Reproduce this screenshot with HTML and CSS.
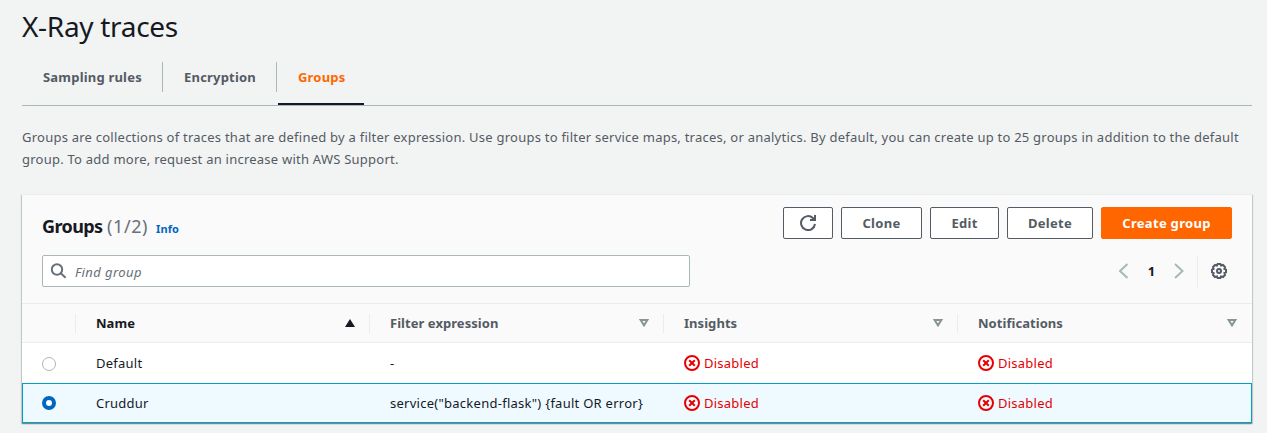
FILE: index.html
```html
<!DOCTYPE html>
<html lang="en">
<head>
<meta charset="utf-8">
<title>X-Ray traces</title>
<link rel="stylesheet" href="styles.css">
</head>
<body>
<svg class="defs" width="0" height="0" aria-hidden="true">
  <symbol id="disabled" viewBox="0 0 16 16"><circle cx="8" cy="8" r="7"/><path d="M5.200 5.200l5.600 5.600M10.800 5.200l-5.600 5.600"/></symbol>
  <symbol id="sort" viewBox="0 0 10 8"><path d="M1.600 1h6.800L5 6.400z"/></symbol>
</svg>
<main class="page">
  <h1 class="title">X-Ray traces</h1>
  <nav class="tabs">
    <a class="tab tab-rules">Sampling rules</a>
    <a class="tab tab-encryption">Encryption</a>
    <a class="tab tab-active">Groups</a>
  </nav>
  <p class="description">
    <span class="line">Groups are collections of traces that are defined by a filter expression. Use groups to filter service maps, traces, or analytics. By default, you can create up to 25 groups in addition to the default</span>
    <span class="line">group. To add more, request an increase with AWS Support.</span>
  </p>
  <section class="panel">
    <header class="toolbar">
      <h2 class="heading"><span class="heading-name">Groups</span><span class="count">(1/2)</span><a class="info">Info</a></h2>
      <div class="actions">
        <button class="button refresh" aria-label="Refresh"><svg width="16" height="16" viewBox="0 0 16 16"><path d="M15 9A7 7 0 1 1 12.900 3l2 2M15 0v5h-5"/></svg></button>
        <button class="button clone">Clone</button>
        <button class="button edit">Edit</button>
        <button class="button delete">Delete</button>
        <button class="button primary">Create group</button>
      </div>
    </header>
    <div class="filters">
      <div class="search">
        <svg width="16" height="16" viewBox="0 0 16 16"><circle cx="6" cy="6.500" r="5.200"/><path d="M9.800 10.300l4.800 4.500"/></svg>
        <span>Find group</span>
      </div>
      <div class="pagination">
        <svg class="arrow" width="10" height="16" viewBox="0 0 10 16"><path d="M8.500 1L1 8l7.500 7"/></svg>
        <b class="page-number">1</b>
        <svg class="arrow" width="10" height="16" viewBox="0 0 10 16"><path d="M1 1l7.500 7L1 15"/></svg>
        <span class="settings"><svg width="16" height="16" viewBox="0 0 16 16"><path d="M6.600 1h2.800l.6 1.600 2-.6 2 2-.6 2 1.600.6v2.800l-1.600.6.6 2-2 2-2-.6-.6 1.600H6.600L6 13.400l-2 .6-2-2 .6-2L1 9.400V6.600L2.600 6 2 4l2-2 2 .6z"/><circle cx="8" cy="8" r="2"/></svg></span>
      </div>
    </div>
    <div class="row head">
      <div class="cell select"></div>
      <div class="cell sorted"><span>Name</span><svg class="asc" width="10" height="8" viewBox="0 0 10 8"><path d="M5 0l5 8H0z"/></svg></div>
      <div class="cell"><span>Filter expression</span><svg class="sort"><use href="#sort"/></svg></div>
      <div class="cell"><span>Insights</span><svg class="sort"><use href="#sort"/></svg></div>
      <div class="cell"><span>Notifications</span><svg class="sort"><use href="#sort"/></svg></div>
    </div>
    <div class="row">
      <div class="cell select"><i class="radio"></i></div>
      <div class="cell">Default</div>
      <div class="cell">-</div>
      <div class="cell status"><svg><use href="#disabled"/></svg><span>Disabled</span></div>
      <div class="cell status"><svg><use href="#disabled"/></svg><span>Disabled</span></div>
    </div>
    <div class="row selected">
      <div class="cell select"><i class="radio checked"></i></div>
      <div class="cell">Cruddur</div>
      <div class="cell expression">service("backend-flask") {fault OR error}</div>
      <div class="cell status"><svg><use href="#disabled"/></svg><span>Disabled</span></div>
      <div class="cell status"><svg><use href="#disabled"/></svg><span>Disabled</span></div>
    </div>
  </section>
</main>
</body>
</html>
```
FILE: styles.css
```css
* { box-sizing: border-box; }
body { margin: 0; height: 433px; overflow: hidden; background: #f2f3f3; color: #16191f; font: 13px/22px "Noto Sans", sans-serif; letter-spacing: .237px; }
.defs { display: block; height: 0; }
svg { display: block; flex: none; fill: none; stroke: currentColor; stroke-width: 2; }
.page { padding: 8px 15px 0 22px; }
.title { margin: 0; height: 37px; font-size: 28px; line-height: 36px; font-weight: 400; letter-spacing: -.3px; }
.tabs { display: flex; height: 61px; padding-top: 17px; border-bottom: 1px solid #aab7b8; color: #545b64; font-weight: 700; letter-spacing: .2px; }
.tab { height: 30px; line-height: 30px; padding-left: 21px; border-right: 1px solid #aab7b8; white-space: nowrap; }
.tab-rules { width: 141px; }
.tab-encryption { width: 114px; }
.tab-active { width: 86px; height: 43px; margin-left: 1px; padding-left: 20px; border-right: 0; border-bottom: 2px solid #16191f; color: #ff6600; }
.description { margin: 20px 0 24px; color: #545b64; }
.line { display: block; white-space: nowrap; }
.panel { width: 1230px; border-top: 1px solid #eaeded; background: #fff; box-shadow: 0 1px 1px rgba(0,28,36,.3), 1px 1px 1px rgba(0,28,36,.15), -1px 1px 1px rgba(0,28,36,.15); }
.toolbar { display: flex; justify-content: space-between; padding: 12px 20px 0; height: 60px; background: #fafafa; }
.heading { display: flex; align-items: baseline; margin: 0; font-size: 18px; line-height: 38px; font-weight: 700; }
.heading-name { width: 65px; letter-spacing: -.6px; }
.count { width: 49px; font-weight: 400; color: #687078; letter-spacing: .6px; }
.info { font-size: 11px; color: #0066c0; letter-spacing: .1px; }
.actions { display: flex; gap: 8px; }
.button { display: flex; align-items: center; justify-content: center; height: 32px; padding: 0; border: 1px solid #545b64; border-radius: 2px; background: #fff; color: #545b64; font: 700 13px/20px "Noto Sans", sans-serif; letter-spacing: .3px; white-space: nowrap; }
.refresh { width: 50px; }
.clone { width: 81px; }
.edit { width: 69px; }
.delete { width: 86px; }
.primary { width: 131px; border-color: #ff6600; background: #ff6600; color: #fff; }
.filters { display: flex; justify-content: space-between; height: 48px; padding: 0 20px; background: #fafafa; }
.search { display: flex; align-items: center; gap: 8px; width: 648px; height: 32px; padding-left: 8px; border: 1px solid #aab7b8; border-radius: 2px; background: #fff; color: #687078; font-style: italic; letter-spacing: .4px; }
.search span { padding-top: 2px; }
.pagination { display: flex; align-items: center; height: 32px; }
.arrow { color: #aab7b8; }
.page-number { width: 45px; text-align: center; }
.settings { display: flex; align-items: center; height: 32px; width: 35px; margin-left: 13px; padding-left: 13px; border-left: 1px solid #eaeded; color: #545b64; }
.row { display: grid; grid-template-columns: 54px repeat(4, 294px); height: 40px; }
.cell { display: flex; align-items: center; padding-left: 20px; white-space: nowrap; }
.head { border-top: 1px solid #eaeded; border-bottom: 1px solid #eaeded; background: #fafafa; color: #545b64; font-weight: 700; letter-spacing: .05px; }
.head .cell { justify-content: space-between; height: 19px; margin-top: 10px; padding-right: 14px; border-right: 1px solid #eaeded; }
.head .cell span { margin-top: -2px; }
.head .cell svg { margin-top: -1px; }
.head .cell:last-child { border-right: 0; padding-right: 15px; }
.head .sorted { color: #16191f; }
.asc { fill: currentColor; stroke: none; }
.sort { width: 10px; height: 8px; color: #879596; }
.radio { width: 14px; height: 14px; margin-top: 1px; border: 1px solid #aab7b8; border-radius: 50%; background: #fff; }
.radio.checked { margin-top: 0; border: 4px solid #0066c0; }
.expression { letter-spacing: .265px; }
.status { gap: 4px; color: #e60000; }
.status svg { width: 16px; height: 16px; }
.selected { border: 1px solid #00a1c9; background: #eefaff; grid-template-columns: 53px repeat(3, 294px) 293px; }
.selected .select { padding-left: 19px; }
```
